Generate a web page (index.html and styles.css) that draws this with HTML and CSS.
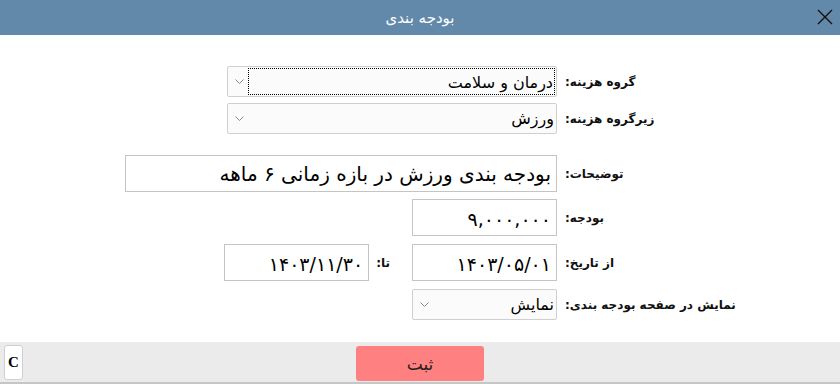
FILE: index.html
```html
<!DOCTYPE html>
<html lang="fa">
<head>
    <meta charset="UTF-8">
    <meta name="viewport" content="width=device-width, initial-scale=1.0">
    <title>بودجه بندی</title>
    <link rel="stylesheet" href="styles.css">
</head>
<body>
    <div class="dialogo" dir="rtl">
        <div class="barra-titulo">
            <span class="titulo">بودجه بندی</span>
            <button class="cerrar" aria-label="بستن">
                <svg width="16" height="16" viewBox="0 0 16 16">
                    <path d="M1 1 L15 15 M15 1 L1 15" stroke="#111" stroke-width="1.4" fill="none"/>
                </svg>
            </button>
        </div>

        <div class="formulario">
            <div class="fila fila-grupo">
                <label class="etiqueta">گروه هزینه:</label>
                <div class="selector ancho-medio">
                    <span class="valor enfocado">درمان و سلامت</span>
                    <svg class="flecha" width="9" height="6" viewBox="0 0 9 6"><path d="M0.5 0.5 L4.5 4.5 L8.5 0.5" stroke="#8a8a8a" fill="none"/></svg>
                </div>
            </div>

            <div class="fila fila-subgrupo">
                <label class="etiqueta">زیرگروه هزینه:</label>
                <div class="selector ancho-medio">
                    <span class="valor">ورزش</span>
                    <svg class="flecha" width="9" height="6" viewBox="0 0 9 6"><path d="M0.5 0.5 L4.5 4.5 L8.5 0.5" stroke="#8a8a8a" fill="none"/></svg>
                </div>
            </div>

            <div class="fila fila-desc">
                <label class="etiqueta">توضیحات:</label>
                <div class="campo ancho-total texto-grande">بودجه بندی ورزش در بازه زمانی ۶ ماهه</div>
            </div>

            <div class="fila fila-monto">
                <label class="etiqueta">بودجه:</label>
                <div class="campo ancho-corto numeros">۹,۰۰۰,۰۰۰</div>
            </div>

            <div class="fila fila-fechas">
                <label class="etiqueta">از تاریخ:</label>
                <div class="campo ancho-corto numeros">۱۴۰۳/۰۵/۰۱</div>
                <label class="etiqueta-ta">تا:</label>
                <div class="campo ancho-corto numeros">۱۴۰۳/۱۱/۳۰</div>
            </div>

            <div class="fila fila-mostrar">
                <label class="etiqueta">نمایش در صفحه بودجه بندی:</label>
                <div class="selector ancho-corto">
                    <span class="valor">نمایش</span>
                    <svg class="flecha" width="9" height="6" viewBox="0 0 9 6"><path d="M0.5 0.5 L4.5 4.5 L8.5 0.5" stroke="#8a8a8a" fill="none"/></svg>
                </div>
            </div>
        </div>

        <div class="pie" dir="ltr">
            <button class="boton-c">C</button>
            <button class="boton-guardar">ثبت</button>
            <span></span>
        </div>
    </div>
</body>
</html>
```

FILE: styles.css
```css
body {
    margin: 0;
    background-color: #ffffff;
    font-family: "DejaVu Sans", "Noto Sans", sans-serif;
    overflow: hidden;
}

.dialogo {
    display: flex;
    flex-direction: column;
    height: 384px;
    width: 840px;
}

.barra-titulo {
    height: 35px;
    background-color: #6389aa;
    display: flex;
    align-items: center;
    justify-content: center;
    position: relative;
}

.titulo {
    color: #ffffff;
    font-size: 15px;
}

.cerrar {
    position: absolute;
    left: 817px;
    top: 9px;
    width: 16px;
    height: 16px;
    padding: 0;
    border: none;
    background: none;
    display: flex;
}

.formulario {
    flex: 1;
    width: 620px;
    margin: 0 95px 0 auto;
    padding-top: 31px;
}

.fila {
    display: flex;
    align-items: center;
}

.fila-grupo { height: 31px; }
.fila-subgrupo { height: 31px; margin-top: 6px; }
.fila-desc { height: 37px; margin-top: 21px; }
.fila-monto { height: 37px; margin-top: 7px; }
.fila-fechas { height: 37px; margin-top: 8px; }
.fila-mostrar { height: 31px; margin-top: 8px; }

.etiqueta {
    width: 180px;
    margin-left: 8px;
    font-size: 12px;
    font-weight: bold;
    color: #111;
    white-space: nowrap;
    display: flex;
    justify-content: flex-end;
}

.etiqueta-ta {
    font-size: 12px;
    font-weight: bold;
    color: #111;
    margin: 0 22px 0 7px;
}

.ancho-medio { width: 330px; }
.ancho-total { width: 432px; }
.ancho-corto { width: 145px; }

.campo {
    box-sizing: border-box;
    height: 100%;
    border: 1px solid #c4c4c4;
    background: #ffffff;
    display: flex;
    align-items: center;
    padding: 0 5px;
    font-size: 16px;
    color: #000;
    white-space: nowrap;
}

.texto-grande {
    font-size: 20px;
}

.numeros {
    font-size: 19px;
    padding-top: 2px;
}

.selector {
    box-sizing: border-box;
    height: 100%;
    border: 1px solid #cfcfcf;
    border-radius: 2px;
    background: #fbfbfb;
    display: flex;
    align-items: center;
    justify-content: space-between;
    padding: 0 1px 0 7px;
    font-size: 16px;
    color: #000;
}

.valor {
    padding: 0 1px;
    white-space: nowrap;
}

.enfocado {
    flex: 1;
    margin-left: 4px;
    height: 27px;
    line-height: 27px;
    box-sizing: border-box;
    border: 1px dotted #000;
    text-align: right;
}

.flecha {
    flex-shrink: 0;
}

.pie {
    height: 40px;
    background-color: #ebebeb;
    border-bottom: 2px solid #c6c6c6;
    display: grid;
    grid-template-columns: 1fr auto 1fr;
    align-items: start;
}

.boton-c {
    justify-self: start;
    margin: 3px 0 0 4px;
    width: 19px;
    height: 35px;
    padding: 0;
    background: #ffffff;
    border: 1px solid #cfcfcf;
    border-radius: 3px;
    font-family: "Liberation Serif", serif;
    font-weight: bold;
    font-size: 15px;
    color: #000;
}

.boton-guardar {
    margin-top: 4px;
    width: 128px;
    height: 35px;
    border: none;
    border-radius: 3px;
    background-color: #ff8080;
    font-family: "DejaVu Sans", sans-serif;
    font-size: 17px;
    color: #222;
}
```
